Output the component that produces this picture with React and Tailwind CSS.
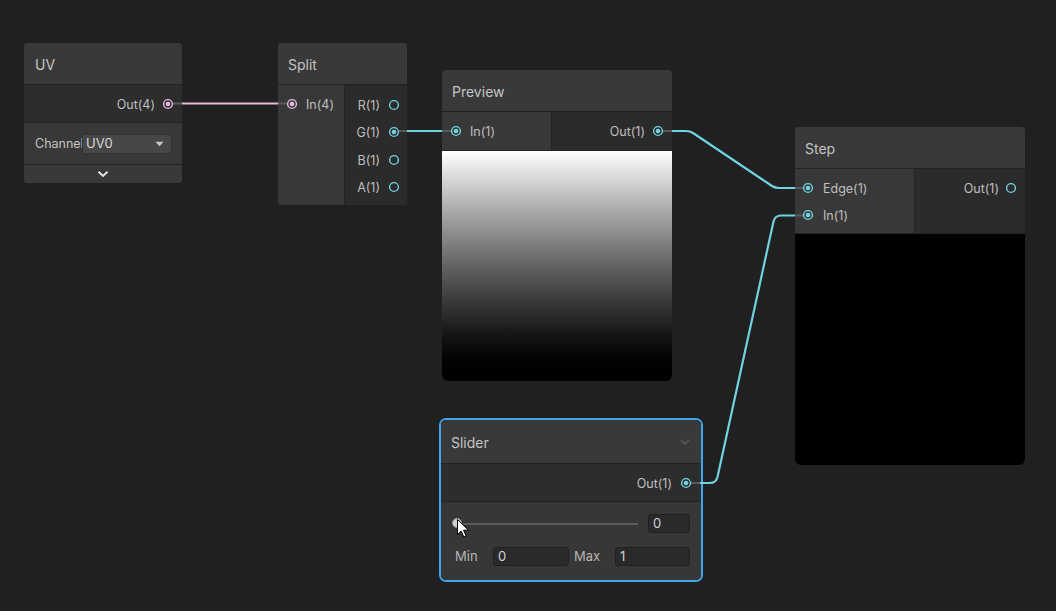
import React from "react";

const CYAN = "#6fd3e0";
const PINK = "#e8b9e0";

function Port({ connected, color = CYAN }) {
  return (
    <svg width="12" height="12" viewBox="0 0 12 12" className="shrink-0 block">
      <circle cx="6" cy="6" r="4.4" fill="none" stroke={color} strokeWidth="1.4" />
      {connected && <circle cx="6" cy="6" r="2.3" fill={color} />}
    </svg>
  );
}

function L({ children }) {
  return <span className="mt-[3px]">{children}</span>;
}

function Header({ title, className = "" }) {
  return (
    <div className={"h-[41px] bg-[#393939] flex items-center pl-[10px] text-[14px] text-[#c4c4c4] " + className}>
      <span className="mt-[1px]">{title}</span>
    </div>
  );
}

function Field({ value, className = "" }) {
  return (
    <div className={"h-[19px] bg-[#2a2a2a] border border-[#202020] rounded-[3px] flex items-center pl-[4px] text-[13px] text-[#d2d2d2] " + className}>
      {value}
    </div>
  );
}

function Cursor() {
  return (
    <svg width="14" height="20" viewBox="0 0 14 20" className="absolute left-[457px] top-[519px]">
      <path
        d="M0.5 0.5 L0.5 15.5 L4.2 12 L6.8 18 L9.2 17 L6.6 11.2 L11.5 11.2 Z"
        fill="#ffffff"
        stroke="#000000"
        strokeWidth="1"
        strokeLinejoin="round"
      />
    </svg>
  );
}

export default function App() {
  return (
    <div className="relative w-[1056px] h-[611px] bg-[#202020] overflow-hidden font-['Inter','Noto_Sans',sans-serif] text-[12.5px] text-[#bfbfbf]">
      {/* UV node */}
      <div className="absolute left-[24px] top-[43px] w-[158px] flex flex-col gap-px bg-[#232323] rounded-[3px] overflow-hidden">
        <Header title="UV" className="pl-[11px]" />
        <div className="h-[37px] bg-[#2d2d2d] flex items-center justify-end pr-[8px] gap-[7px]">
          <L>Out(4)</L>
          <Port connected color={PINK} />
        </div>
        <div className="h-[41px] bg-[#383838] flex items-center pl-[11px]">
          <span className="w-[47px] mt-[2px] text-[12.5px] text-[#c4c4c4]">Channel</span>
          <div className="w-[90px] h-[20px] bg-[#474747] border border-[#333333] rounded-[3px] flex items-center justify-between pl-[3px] pr-[7px] text-[13px] text-[#d8d8d8]">
            <span>UV0</span>
            <svg width="9" height="6" viewBox="0 0 9 6">
              <path d="M0.5 0.8 L8.5 0.8 L4.5 5.2 Z" fill="#c8c8c8" />
            </svg>
          </div>
        </div>
        <div className="h-[18px] bg-[#393939] flex items-center justify-center">
          <svg width="12" height="8" viewBox="0 0 12 8">
            <path d="M1.5 1.8 L6 6 L10.5 1.8" fill="none" stroke="#e6e6e6" strokeWidth="2" />
          </svg>
        </div>
      </div>

      {/* Split node */}
      <div className="absolute left-[278px] top-[43px] w-[129px] flex flex-col gap-px bg-[#232323] rounded-[3px] overflow-hidden">
        <Header title="Split" />
        <div className="h-[120px] flex gap-px">
          <div className="w-[66px] bg-[#383838] pt-[5px]">
            <div className="h-[27.5px] flex items-center pl-[8px] gap-[8px]">
              <Port connected color={PINK} />
              <L>In(4)</L>
            </div>
          </div>
          <div className="flex-1 bg-[#2b2b2b] pt-[6px]">
            {["R(1)", "G(1)", "B(1)", "A(1)"].map((l) => (
              <div key={l} className="h-[27.5px] flex items-center justify-end pr-[7px] gap-[8px]">
                <L>{l}</L>
                <Port connected={l === "G(1)"} />
              </div>
            ))}
          </div>
        </div>
      </div>

      {/* Preview node */}
      <div className="absolute left-[442px] top-[70px] w-[230px] flex flex-col gap-px bg-[#232323] rounded-[4px] overflow-hidden">
        <Header title="Preview" />
        <div className="h-[38px] flex gap-px">
          <div className="w-[109px] bg-[#383838] flex items-center pl-[8px] gap-[8px]">
            <Port connected />
            <L>In(1)</L>
          </div>
          <div className="flex-1 bg-[#2b2b2b] flex items-center justify-end pr-[8px] gap-[7px]">
            <L>Out(1)</L>
            <Port connected />
          </div>
        </div>
        <div className="h-[230px] bg-gradient-to-b from-[#ffffff] to-[#000000] rounded-b-[6px]" />
      </div>

      {/* Step node */}
      <div className="absolute left-[795px] top-[127px] w-[230px] flex flex-col gap-px bg-[#232323] rounded-[4px] overflow-hidden">
        <Header title="Step" />
        <div className="h-[64px] flex gap-px">
          <div className="w-[119px] bg-[#383838] pt-[5px]">
            <div className="h-[27.5px] flex items-center pl-[7px] gap-[9px]">
              <Port connected />
              <L>Edge(1)</L>
            </div>
            <div className="h-[27.5px] flex items-center pl-[7px] gap-[9px]">
              <Port connected />
              <L>In(1)</L>
            </div>
          </div>
          <div className="flex-1 bg-[#2b2b2b] pt-[5px]">
            <div className="h-[27.5px] flex items-center justify-end pr-[8px] gap-[6px]">
              <L>Out(1)</L>
              <Port />
            </div>
          </div>
        </div>
        <div className="h-[231px] bg-[#000000] rounded-b-[6px]" />
      </div>

      {/* Slider node (selected) */}
      <div className="absolute left-[439px] top-[418px] w-[264px] border-2 border-[#3ea6ec] rounded-[7px] overflow-hidden">
        <div className="flex flex-col gap-px bg-[#232323]">
          <div className="h-[43px] bg-[#393939] flex items-center justify-between pl-[10px] pr-[11px] text-[14px] text-[#c4c4c4]">
            <span className="mt-[1px]">Slider</span>
            <svg width="10" height="6" viewBox="0 0 10 6">
              <path d="M1 1 L5 5 L9 1" fill="none" stroke="#5c5c5c" strokeWidth="1.2" />
            </svg>
          </div>
          <div className="h-[37px] bg-[#2d2d2d] flex items-center justify-end pr-[9px] gap-[8px]">
            <L>Out(1)</L>
            <Port connected />
          </div>
          <div className="h-[78px] bg-[#373737] flex flex-col pt-[12px] gap-[14px]">
            <div className="flex items-center pl-[11px]">
              <div className="relative w-[186px] h-[19px] flex items-center">
                <div className="ml-[5px] flex-1 h-[2px] bg-[#5e5e5e]" />
                <div className="absolute left-0 top-[4px] w-[10px] h-[10px] rounded-full bg-[#cfcfcf] border border-[#9a9a9a]" />
              </div>
              <Field value="0" className="ml-[10px] w-[42px]" />
            </div>
            <div className="flex items-center pl-[14px] text-[13px] text-[#b4b4b4]">
              <span className="w-[38px]">Min</span>
              <Field value="0" className="w-[76px]" />
              <span className="ml-[5px] w-[41px]">Max</span>
              <Field value="1" className="w-[75px]" />
            </div>
          </div>
        </div>
      </div>

      {/* Wires */}
      <svg className="absolute left-0 top-0 pointer-events-none" width="1056" height="611" viewBox="0 0 1056 611">
        <g stroke="#5a5a5a" strokeWidth="2" fill="none">
          <line x1="173" y1="103.5" x2="182" y2="103.5" />
          <line x1="278" y1="103.5" x2="287" y2="103.5" />
          <line x1="399" y1="131" x2="407" y2="131" />
          <line x1="442" y1="131" x2="451" y2="131" />
          <line x1="663" y1="131" x2="672" y2="131" />
          <line x1="795" y1="188" x2="803" y2="188" />
          <line x1="795" y1="215.5" x2="803" y2="215.5" />
          <line x1="691" y1="483" x2="700" y2="483" />
        </g>
        <line x1="182" y1="103.5" x2="278" y2="103.5" stroke={PINK} strokeWidth="2.2" />
        <g stroke={CYAN} strokeWidth="2.2" fill="none" strokeLinejoin="round">
          <line x1="407" y1="131" x2="442" y2="131" />
          <path d="M672 131 L686 131 Q690 131 693 133 L772 186 Q775 188 779 188 L795 188" />
          <path d="M700 483 L710 483 Q716 483 717.5 477 L773.5 221.5 Q775 215.5 781 215.5 L795 215.5" />
        </g>
      </svg>

      <Cursor />
    </div>
  );
}
